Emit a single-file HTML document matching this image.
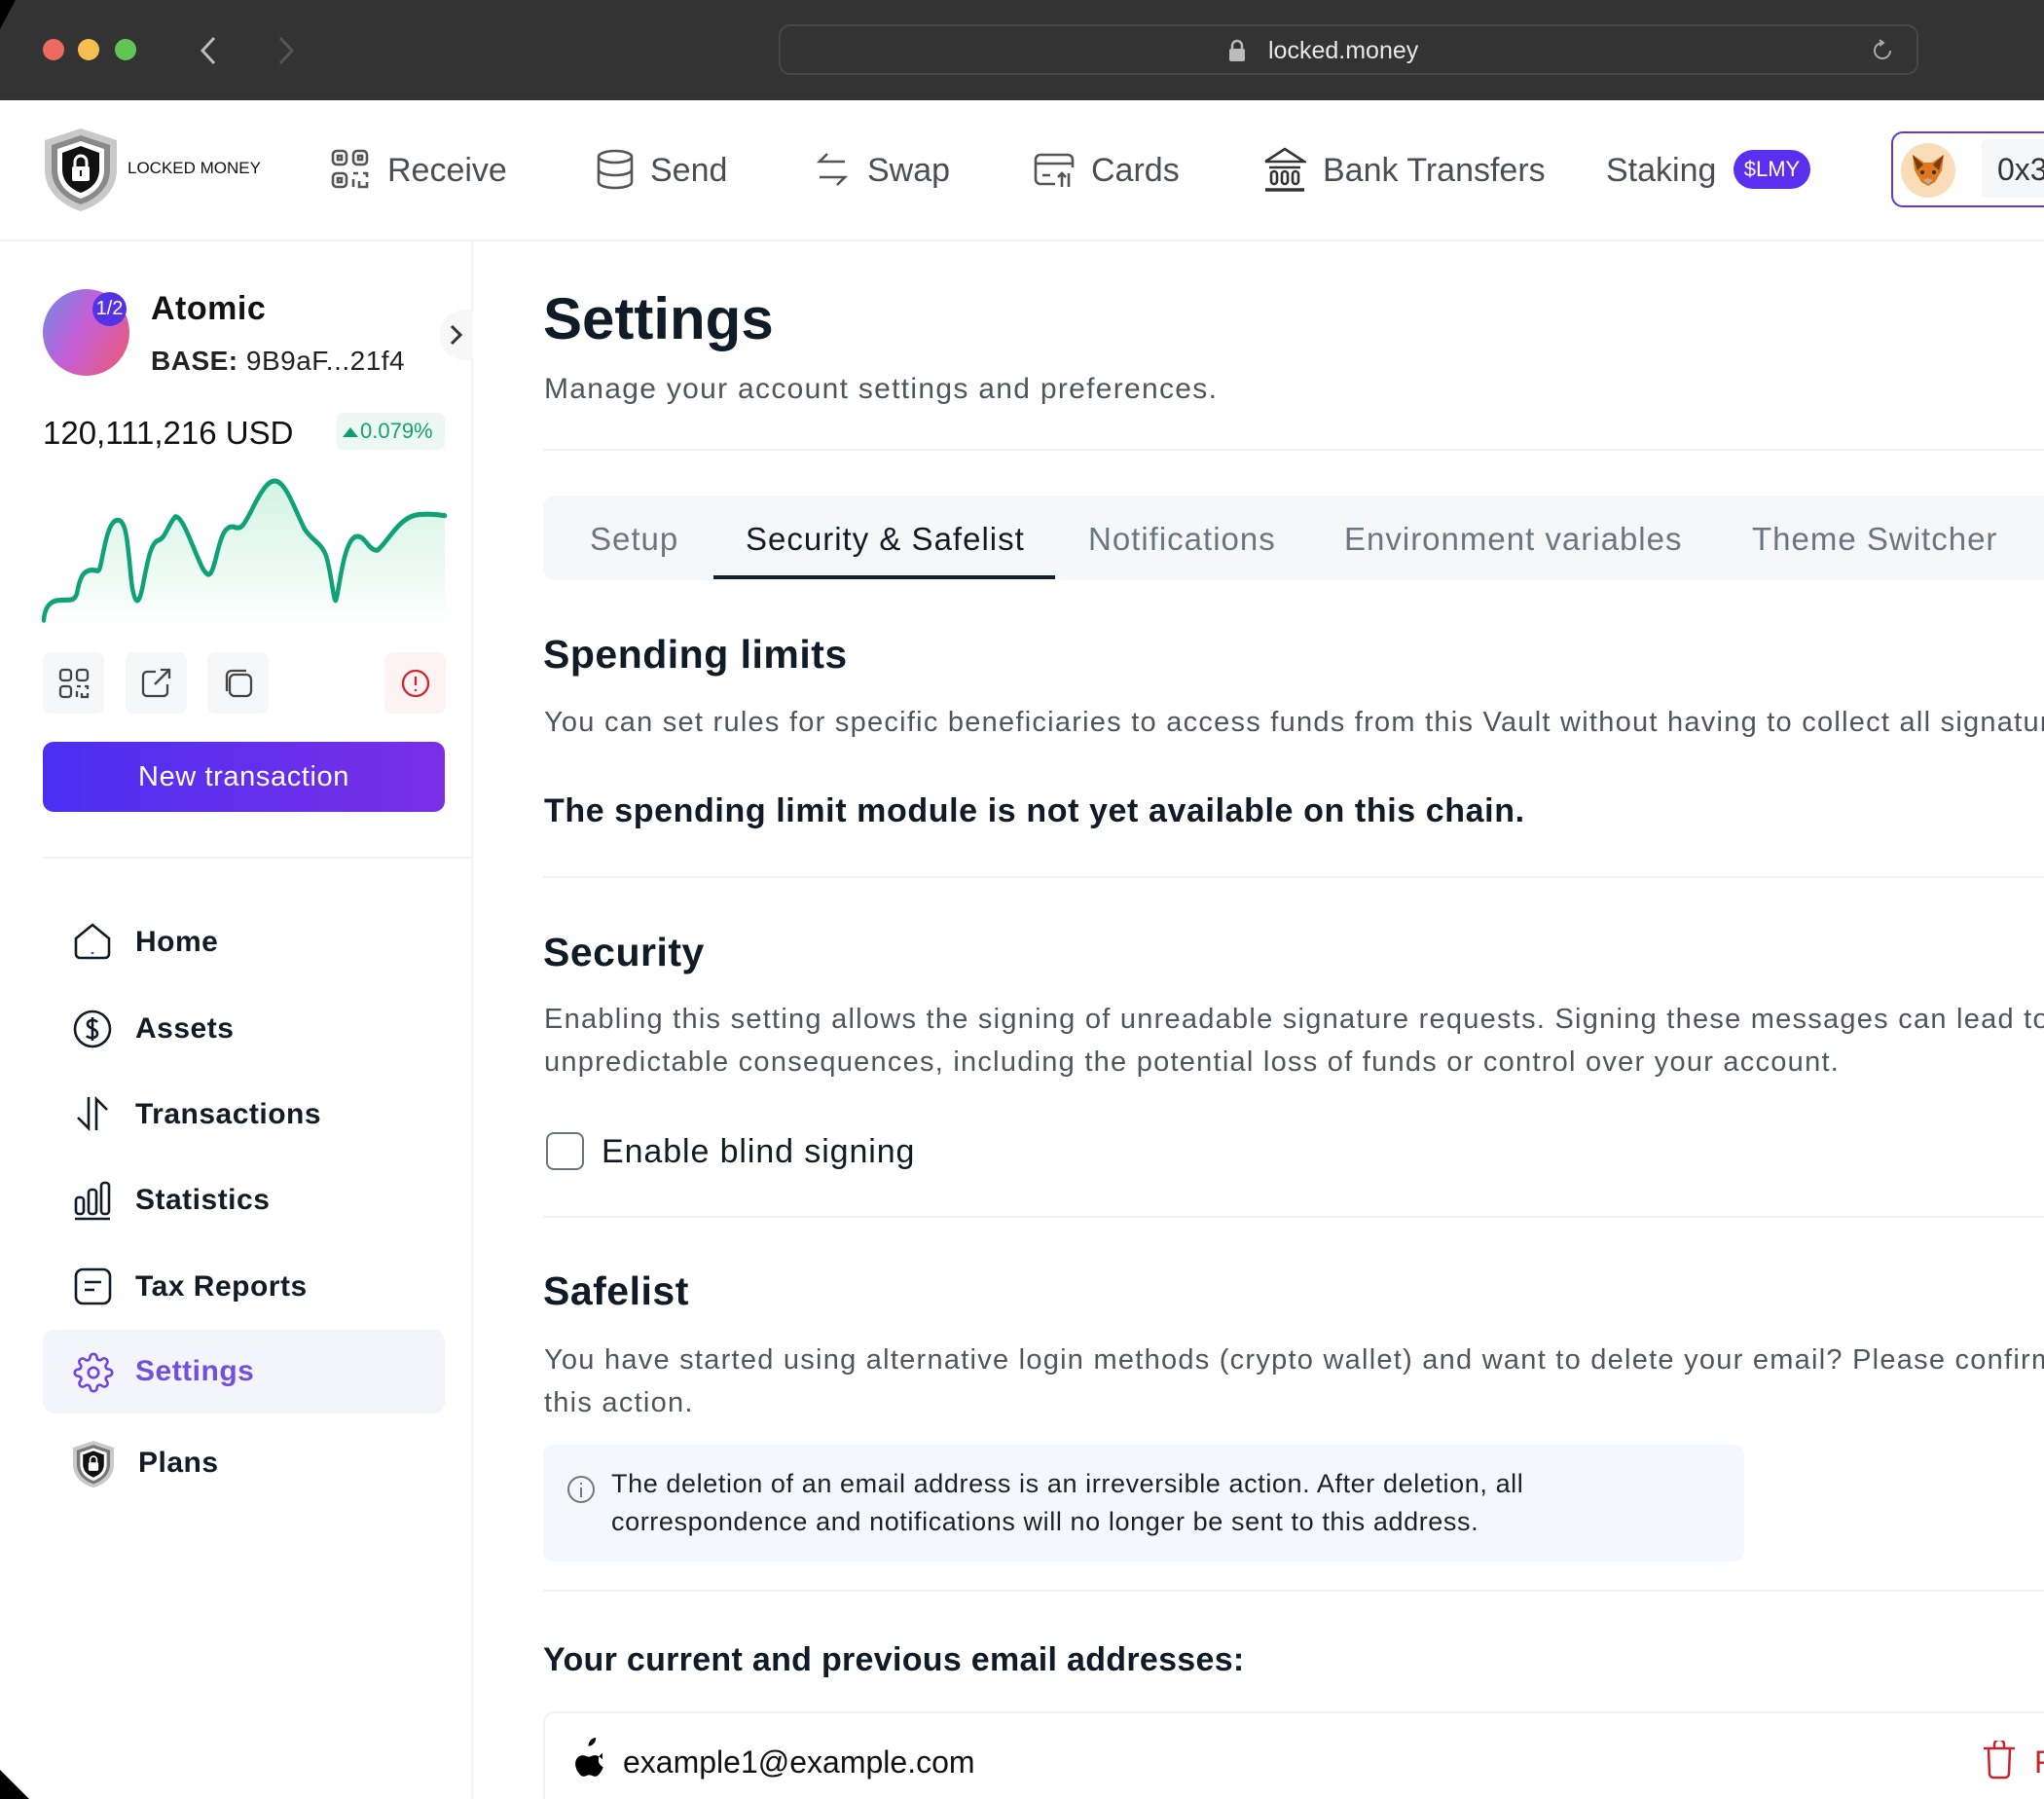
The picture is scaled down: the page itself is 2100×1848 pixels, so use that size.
<!DOCTYPE html>
<html><head><meta charset="utf-8"><style>
*{margin:0;padding:0;box-sizing:border-box}
html,body{width:2100px;height:1848px;overflow:hidden;background:#fff}
body{position:relative;font-family:"Liberation Sans",sans-serif;color:#0f1b26}
.a{position:absolute}
.t{position:absolute;white-space:nowrap;line-height:1}
.nav{font-size:34px;color:#4b4f55}
.side{font-size:30px;font-weight:bold;color:#121c26;letter-spacing:.5px}
.h2{font-size:41px;font-weight:bold;color:#0f1b26;letter-spacing:.5px}
.p{font-size:29px;color:#50555b;letter-spacing:1.25px}
.hr{position:absolute;height:2px;background:#f1f2f4}
.tab{font-size:33px;color:#6b7680;letter-spacing:1px}
.ib{position:absolute;top:670px;width:63px;height:63px;border-radius:8px;background:#f6f7f9}
</style></head><body>
<!-- chrome -->
<div class="a" style="left:0;top:0;width:2100px;height:103px;background:#333333"></div>
<div class="a" style="left:0;top:0;width:0;height:0;border-top:30px solid #000;border-right:16px solid transparent"></div>
<div class="a" style="left:44px;top:40px;width:22px;height:22px;border-radius:50%;background:#ec6a5e"></div>
<div class="a" style="left:80px;top:40px;width:22px;height:22px;border-radius:50%;background:#f4bf4f"></div>
<div class="a" style="left:118px;top:40px;width:22px;height:22px;border-radius:50%;background:#61c554"></div>
<svg class="a" style="left:200px;top:36px" width="110" height="32"><path d="M20 3 L8 16 L20 29" stroke="#bbb" stroke-width="3" fill="none"/><path d="M88 3 L100 16 L88 29" stroke="#555" stroke-width="3" fill="none"/></svg>
<div class="a" style="left:800px;top:25px;width:1171px;height:52px;border:2px solid #474747;border-radius:12px"></div>
<svg class="a" style="left:1262px;top:40px" width="18" height="24"><path d="M4 11 V7 a5 5 0 0 1 10 0 V11" stroke="#bbb" stroke-width="2.5" fill="none"/><rect x="1" y="10" width="16" height="13" rx="2" fill="#bbb"/></svg>
<div class="t" style="left:1303px;top:40px;font-size:25px;color:#e8e8e8">locked.money</div>
<svg class="a" style="left:1922px;top:40px" width="24" height="24"><path d="M12 4 A8 8 0 1 0 20 12" stroke="#aaa" stroke-width="2" fill="none"/><path d="M9 1 L13 4 L9 7" stroke="#aaa" stroke-width="2" fill="none"/></svg>

<!-- top nav -->
<svg class="a" style="left:44px;top:130px" width="78" height="88" viewBox="0 0 78 88"><path d="M39 2 L76 14 V44 C76 66 60 80 39 87 C18 80 2 66 2 44 V14Z" fill="#c9c9c9"/><path d="M39 9 L69 19 V44 C69 62 56 74 39 80 C22 74 9 62 9 44 V19Z" fill="#8a8a8a"/><path d="M39 15 L63 23 V44 C63 59 53 69 39 74 C25 69 15 59 15 44 V23Z" fill="#fff"/><path d="M39 20 L58 27 V44 C58 56 50 64 39 68 C28 64 20 56 20 44 V27Z" fill="#111"/><path d="M33 42 V36 a6 6 0 0 1 12 0 V42" stroke="#fff" stroke-width="3" fill="none"/><rect x="30" y="41" width="18" height="15" rx="2" fill="#fff"/><rect x="38" y="45" width="2" height="6" fill="#111"/></svg>
<div class="t" style="left:131px;top:164px;font-size:17px;color:#111">LOCKED MONEY</div>
<svg class="a" style="left:340px;top:153px" width="40" height="42" viewBox="0 0 40 42" fill="none" stroke="#555" stroke-width="2.6"><rect x="2" y="2" width="14" height="14" rx="4"/><rect x="23" y="2" width="14" height="14" rx="4"/><rect x="2" y="25" width="14" height="14" rx="4"/><rect x="7" y="7" width="4" height="4"/><rect x="28" y="7" width="4" height="4"/><rect x="7" y="30" width="4" height="4"/><path d="M23 25 h5 M33 25 h4 v4 M23 31 v8 M29 33 v6 h8 v-5"/></svg>
<div class="t nav" style="left:398px;top:158px">Receive</div>
<svg class="a" style="left:612px;top:153px" width="40" height="42" fill="none" stroke="#555" stroke-width="2.6"><ellipse cx="20" cy="8" rx="17" ry="6"/><path d="M3 8 V34 C3 42 37 42 37 34 V8 M3 21 C3 29 37 29 37 21"/></svg>
<div class="t nav" style="left:668px;top:158px">Send</div>
<svg class="a" style="left:838px;top:156px" width="34" height="36" fill="none" stroke="#555" stroke-width="2.6"><path d="M30 10 H4 L12 2 M4 26 H30 L22 34"/></svg>
<div class="t nav" style="left:891px;top:158px">Swap</div>
<svg class="a" style="left:1062px;top:156px" width="44" height="38" fill="none" stroke="#555" stroke-width="2.6"><path d="M40 16 V8 a5 5 0 0 0 -5 -5 H7 a5 5 0 0 0 -5 5 V28 a5 5 0 0 0 5 5 H22 M2 12 H40 M9 24 H17 M29 22 V36 M25 26 L29 22 L33 26 M36 36 V22"/></svg>
<div class="t nav" style="left:1121px;top:158px">Cards</div>
<svg class="a" style="left:1298px;top:150px" width="44" height="48" fill="none" stroke="#333" stroke-width="2.6"><path d="M2 16 L22 3 L42 16 H2 M6 22 h32"/><rect x="8" y="26" width="6" height="13" rx="3"/><rect x="19" y="26" width="6" height="13" rx="3"/><rect x="30" y="26" width="6" height="13" rx="3"/><path d="M2 45 H42" stroke-width="3.5"/></svg>
<div class="t nav" style="left:1359px;top:158px">Bank Transfers</div>
<div class="t nav" style="left:1650px;top:158px">Staking</div>
<div class="a" style="left:1781px;top:154px;width:79px;height:40px;border-radius:20px;background:#5b2ff0;color:#fff;font-size:22px;line-height:40px;text-align:center">$LMY</div>
<div class="a" style="left:1943px;top:135px;width:200px;height:78px;border:2px solid #5a3bd7;border-radius:12px"></div>
<div class="a" style="left:1953px;top:147px;width:56px;height:56px;border-radius:50%;background:#fbdcb8"></div>
<svg class="a" style="left:1962px;top:157px" width="38" height="36"><path d="M3 2 L15 10 H23 L35 2 L33 18 L26 30 L19 34 L12 30 L5 18Z" fill="#e2761b"/><path d="M3 2 L14 12 L8 18Z M35 2 L24 12 L30 18Z" fill="#763d16"/><path d="M14 28 L19 32 L24 28 L19 26Z" fill="#c0ad9e"/><circle cx="13" cy="20" r="2" fill="#233447"/><circle cx="25" cy="20" r="2" fill="#233447"/></svg>
<div class="a" style="left:2036px;top:143px;width:80px;height:60px;border-radius:6px;background:#f5f6f8"></div>
<div class="t" style="left:2052px;top:158px;font-size:32px;color:#333">0x3</div>
<div class="hr" style="left:0;top:246px;width:2100px"></div>

<!-- sidebar -->
<div class="a" style="left:484px;top:247px;width:2px;height:1601px;background:#f3f4f6"></div>
<div class="a" style="left:44px;top:297px;width:89px;height:89px;border-radius:50%;background:linear-gradient(120deg,#6f8be8,#c35fd6 45%,#ee5a6f)"></div>
<div class="a" style="left:95px;top:300px;width:35px;height:35px;border-radius:50%;background:#5432e6;color:#fff;font-size:20px;line-height:35px;text-align:center">1/2</div>
<div class="t" style="left:155px;top:300px;font-size:34px;font-weight:bold;color:#111;letter-spacing:.5px">Atomic</div>
<div class="t" style="left:155px;top:357px;font-size:28px;color:#222;letter-spacing:.5px"><b>BASE:</b> 9B9aF...21f4</div>
<div class="a" style="left:452px;top:318px;width:34px;height:52px;border-radius:26px 0 0 26px;background:#f7f7f8"></div>
<svg class="a" style="left:461px;top:332px" width="16" height="24"><path d="M3 3 L12 12 L3 21" stroke="#333" stroke-width="3" fill="none"/></svg>
<div class="t" style="left:44px;top:428px;font-size:33px;color:#111">120,111,216 USD</div>
<div class="a" style="left:346px;top:424px;width:111px;height:38px;border-radius:6px;background:#edf8f3"></div>
<svg class="a" style="left:352px;top:437px" width="16" height="12"><path d="M0 12 L8 2 L16 12Z" fill="#0f9e72"/></svg>
<div class="t" style="left:370px;top:432px;font-size:22px;color:#16a078">0.079%</div>
<svg class="a" style="left:40px;top:480px" width="420" height="180" viewBox="40 480 420 180">
<defs><linearGradient id="g" x1="0" y1="0" x2="0" y2="1"><stop offset="0" stop-color="#c8f0dd"/><stop offset="1" stop-color="#fff"/></linearGradient></defs>
<g transform="translate(0,-37.2) scale(1,1.143)">
<path d="M45 590 C46 575 55 572 62 572 C70 571 76 574 79 566 C82 552 85 546 93 545 C101 544 101 550 104 538 C109 515 113 500 121 500 C130 500 131 520 135 555 C138 575 142 578 146 562 C152 535 155 520 163 518 C170 516 172 505 180 497 C188 496 198 525 208 543 C216 555 218 547 223 530 C228 512 232 505 240 506 C248 509 250 505 258 492 C268 474 276 463 284 465 C295 468 304 493 313 508 C320 518 330 520 335 532 C340 545 343 575 345 572 C348 568 352 520 365 515 C375 512 378 528 388 527 C400 518 410 497 430 495 C442 494 450 495 457 496 V600 H45Z" fill="url(#g)" opacity=".8"/>
<path d="M45 590 C46 575 55 572 62 572 C70 571 76 574 79 566 C82 552 85 546 93 545 C101 544 101 550 104 538 C109 515 113 500 121 500 C130 500 131 520 135 555 C138 575 142 578 146 562 C152 535 155 520 163 518 C170 516 172 505 180 497 C188 496 198 525 208 543 C216 555 218 547 223 530 C228 512 232 505 240 506 C248 509 250 505 258 492 C268 474 276 463 284 465 C295 468 304 493 313 508 C320 518 330 520 335 532 C340 545 343 575 345 572 C348 568 352 520 365 515 C375 512 378 528 388 527 C400 518 410 497 430 495 C442 494 450 495 457 496" fill="none" stroke="#10a276" stroke-width="4.5" stroke-linecap="round"/>
</g>
</svg>
<div class="ib" style="left:44px"></div><div class="ib" style="left:129px"></div><div class="ib" style="left:213px"></div><div class="ib" style="left:395px;background:#fdf3f3"></div>
<svg class="a" style="left:60px;top:686px" width="32" height="32" fill="none" stroke="#444" stroke-width="2.3"><rect x="2" y="2" width="11" height="11" rx="3"/><rect x="19" y="2" width="11" height="11" rx="3"/><rect x="2" y="19" width="11" height="11" rx="3"/><path d="M19 19h4 M27 19h3v3 M19 24v6 M24 26v4h6v-4"/></svg>
<svg class="a" style="left:144px;top:686px" width="32" height="32" fill="none" stroke="#444" stroke-width="2.3"><path d="M16 4 H7 a4 4 0 0 0 -4 4 V25 a4 4 0 0 0 4 4 H24 a4 4 0 0 0 4 -4 V17 M15 17 L30 2 M21 2 H30 V11"/></svg>
<svg class="a" style="left:229px;top:686px" width="32" height="32" fill="none" stroke="#444" stroke-width="2.3"><rect x="7" y="7" width="22" height="22" rx="5"/><path d="M4 24 V8 a5 5 0 0 1 5 -5 H24"/></svg>
<svg class="a" style="left:411px;top:686px" width="32" height="32" fill="none" stroke="#d0262c" stroke-width="2.3"><circle cx="16" cy="16" r="13"/><path d="M16 9 V18 M16 22 V24"/></svg>
<div class="a" style="left:44px;top:762px;width:413px;height:72px;border-radius:11px;background:linear-gradient(90deg,#4a2ff2,#7b2fe6)"></div>
<div class="t" style="left:44px;top:784px;width:413px;text-align:center;font-size:29px;color:#fff;letter-spacing:.6px">New transaction</div>
<div class="hr" style="left:44px;top:880px;width:441px"></div>

<svg class="a" style="left:75px;top:947px" width="42" height="42" fill="none" stroke="#0f1b26" stroke-width="2.6"><path d="M3 17 L20 3 L37 17 V33 a4 4 0 0 1 -4 4 H7 a4 4 0 0 1 -4 -4Z"/><path d="M20 31 V33" stroke="#5a3bd7"/></svg>
<div class="t side" style="left:139px;top:953px">Home</div>
<svg class="a" style="left:75px;top:1037px" width="42" height="42" fill="none" stroke="#0f1b26" stroke-width="2.6"><circle cx="20" cy="20" r="18"/><path d="M25 13 C23 10 15 10 15 15 C15 20 25 19 25 25 C25 30 16 30 14 27 M20 8 V32"/></svg>
<div class="t side" style="left:139px;top:1042px">Assets</div>
<svg class="a" style="left:77px;top:1125px" width="38" height="38" fill="none" stroke="#0f1b26" stroke-width="2.6"><path d="M14 2 V34 L3 23 M22 36 V4 L33 15"/></svg>
<div class="t side" style="left:139px;top:1130px">Transactions</div>
<svg class="a" style="left:76px;top:1212px" width="40" height="42" fill="none" stroke="#0f1b26" stroke-width="2.6"><rect x="2" y="18" width="8" height="17" rx="3"/><rect x="15" y="10" width="8" height="25" rx="3"/><rect x="28" y="3" width="8" height="32" rx="3"/><path d="M1 40 H37"/></svg>
<div class="t side" style="left:139px;top:1218px">Statistics</div>
<svg class="a" style="left:76px;top:1302px" width="40" height="40" fill="none" stroke="#0f1b26" stroke-width="2.6"><rect x="2" y="2" width="35" height="35" rx="7"/><path d="M11 15 H28 M11 23 H21"/></svg>
<div class="t side" style="left:139px;top:1307px">Tax Reports</div>
<div class="a" style="left:44px;top:1366px;width:413px;height:86px;border-radius:12px;background:#f4f4fd"></div>
<svg class="a" style="left:75px;top:1389px" width="42" height="42" viewBox="0 0 24 24" fill="none" stroke="#6f44e0" stroke-width="1.5"><circle cx="12" cy="12" r="3"/><path d="M19.4 15a1.65 1.65 0 0 0 .33 1.82l.06.06a2 2 0 1 1-2.83 2.83l-.06-.06a1.65 1.65 0 0 0-1.82-.33 1.65 1.65 0 0 0-1 1.51V21a2 2 0 0 1-4 0v-.09A1.65 1.65 0 0 0 9 19.4a1.650 1.650 0 0 0-1.82.33l-.06.06a2 2 0 1 1-2.83-2.83l.06-.06a1.65 1.65 0 0 0 .33-1.82 1.65 1.65 0 0 0-1.51-1H3a2 2 0 0 1 0-4h.09A1.65 1.65 0 0 0 4.6 9a1.65 1.65 0 0 0-.33-1.82l-.06-.06a2 2 0 1 1 2.83-2.83l.06.06a1.65 1.65 0 0 0 1.82.33H9a1.65 1.65 0 0 0 1-1.51V3a2 2 0 0 1 4 0v.09a1.65 1.65 0 0 0 1 1.51 1.65 1.65 0 0 0 1.82-.33l.06-.06a2 2 0 1 1 2.830 2.830l-.06.06a1.65 1.65 0 0 0-.33 1.82V9a1.65 1.65 0 0 0 1.51 1H21a2 2 0 0 1 0 4h-.09a1.65 1.65 0 0 0-1.51 1z"/></svg>
<div class="t side" style="left:139px;top:1394px;color:#7150e0">Settings</div>
<svg class="a" style="left:73px;top:1479px" width="46" height="50" viewBox="0 0 78 88"><path d="M39 2 L76 14 V44 C76 66 60 80 39 87 C18 80 2 66 2 44 V14Z" fill="#c9c9c9"/><path d="M39 9 L69 19 V44 C69 62 56 74 39 80 C22 74 9 62 9 44 V19Z" fill="#777"/><path d="M39 15 L63 23 V44 C63 59 53 69 39 74 C25 69 15 59 15 44 V23Z" fill="#fff"/><path d="M39 20 L58 27 V44 C58 56 50 64 39 68 C28 64 20 56 20 44 V27Z" fill="#111"/><path d="M33 42 V36 a6 6 0 0 1 12 0 V42" stroke="#fff" stroke-width="3" fill="none"/><rect x="30" y="41" width="18" height="15" rx="2" fill="#fff"/></svg>
<div class="t side" style="left:142px;top:1488px">Plans</div>

<!-- main -->
<div class="t" style="left:558px;top:298px;font-size:60px;font-weight:bold;color:#0f1b26">Settings</div>
<div class="t p" style="left:559px;top:385px;font-size:30px;letter-spacing:1.3px">Manage your account settings and preferences.</div>
<div class="hr" style="left:558px;top:461px;width:1542px"></div>
<div class="a" style="left:558px;top:509px;width:1560px;height:87px;border-radius:12px;background:#f6f7f9"></div>
<div class="t tab" style="left:606px;top:537px">Setup</div>
<div class="t tab" style="left:766px;top:537px;color:#111b24">Security &amp; Safelist</div>
<div class="t tab" style="left:1118px;top:537px">Notifications</div>
<div class="t tab" style="left:1381px;top:537px">Environment variables</div>
<div class="t tab" style="left:1800px;top:537px">Theme Switcher</div>
<div class="a" style="left:733px;top:591px;width:351px;height:4px;background:#14202c"></div>

<div class="t h2" style="left:558px;top:652px">Spending limits</div>
<div class="t p" style="left:559px;top:728px">You can set rules for specific beneficiaries to access funds from this Vault without having to collect all signatures</div>
<div class="t" style="left:559px;top:816px;font-size:34px;font-weight:bold;color:#0f1b26;letter-spacing:.6px">The spending limit module is not yet available on this chain.</div>
<div class="hr" style="left:558px;top:900px;width:1542px"></div>

<div class="t h2" style="left:558px;top:958px">Security</div>
<div class="t p" style="left:559px;top:1033px">Enabling this setting allows the signing of unreadable signature requests. Signing these messages can lead to</div>
<div class="t p" style="left:559px;top:1077px">unpredictable consequences, including the potential loss of funds or control over your account.</div>
<div class="a" style="left:561px;top:1163px;width:39px;height:39px;border:2.5px solid #6b737c;border-radius:8px"></div>
<div class="t" style="left:618px;top:1166px;font-size:34px;color:#111b24;letter-spacing:.9px">Enable blind signing</div>
<div class="hr" style="left:558px;top:1249px;width:1542px"></div>

<div class="t h2" style="left:558px;top:1306px">Safelist</div>
<div class="t p" style="left:559px;top:1383px">You have started using alternative login methods (crypto wallet) and want to delete your email? Please confirm</div>
<div class="t p" style="left:559px;top:1427px">this action.</div>
<div class="a" style="left:558px;top:1484px;width:1234px;height:120px;border-radius:10px;background:#f4f7fb"></div>
<svg class="a" style="left:582px;top:1514px" width="30" height="32" fill="none" stroke="#777" stroke-width="2"><circle cx="15" cy="16" r="13"/><path d="M15 14 V24 M15 9 V11"/></svg>
<div class="t" style="left:628px;top:1511px;font-size:27px;color:#1a2229;letter-spacing:.6px">The deletion of an email address is an irreversible action. After deletion, all</div>
<div class="t" style="left:628px;top:1550px;font-size:27px;color:#1a2229;letter-spacing:.6px">correspondence and notifications will no longer be sent to this address.</div>
<div class="hr" style="left:558px;top:1633px;width:1542px"></div>

<div class="t" style="left:558px;top:1688px;font-size:34px;font-weight:bold;color:#0f1b26;letter-spacing:.3px">Your current and previous email addresses:</div>
<div class="a" style="left:558px;top:1758px;width:1560px;height:120px;border:2px solid #f1f2f4;border-radius:12px"></div>
<svg class="a" style="left:586px;top:1785px" width="38" height="46" viewBox="0 0 24 29"><path d="M16.5 0c.1 1.4-.4 2.8-1.3 3.8-.9 1-2.2 1.7-3.5 1.6-.1-1.4.5-2.7 1.3-3.7.9-1 2.3-1.7 3.5-1.7zM20.8 10c-.2.1-2.6 1.5-2.6 4.4 0 3.4 3 4.6 3.1 4.6 0 .1-.5 1.7-1.6 3.3-1 1.4-2 2.8-3.6 2.8-1.6 0-2-.9-3.8-.9-1.8 0-2.3.9-3.8.9-1.5 0-2.6-1.5-3.6-2.9C3.6 20.4 2.4 16.6 4 13.8c.9-1.5 2.5-2.4 4.1-2.4 1.6 0 2.6 1 3.8 1 1.2 0 2.4-1.1 4.2-1 .7 0 2.7.3 4.7 2.6z" fill="#000"/></svg>
<div class="t" style="left:640px;top:1794px;font-size:32px;color:#111">example1@example.com</div>
<svg class="a" style="left:2036px;top:1788px" width="36" height="40" fill="none" stroke="#c8232c" stroke-width="2.5"><path d="M2 8 H34 M13 8 V4 a4 4 0 0 1 10 0 V8 M7 8 L8 34 a4 4 0 0 0 4 4 H24 a4 4 0 0 0 4 -4 L29 8"/></svg>
<div class="t" style="left:2090px;top:1794px;font-size:32px;color:#c8232c">R</div>
<div class="a" style="left:0;top:1818px;width:0;height:0;border-bottom:30px solid #000;border-right:30px solid transparent"></div>
</body></html>
